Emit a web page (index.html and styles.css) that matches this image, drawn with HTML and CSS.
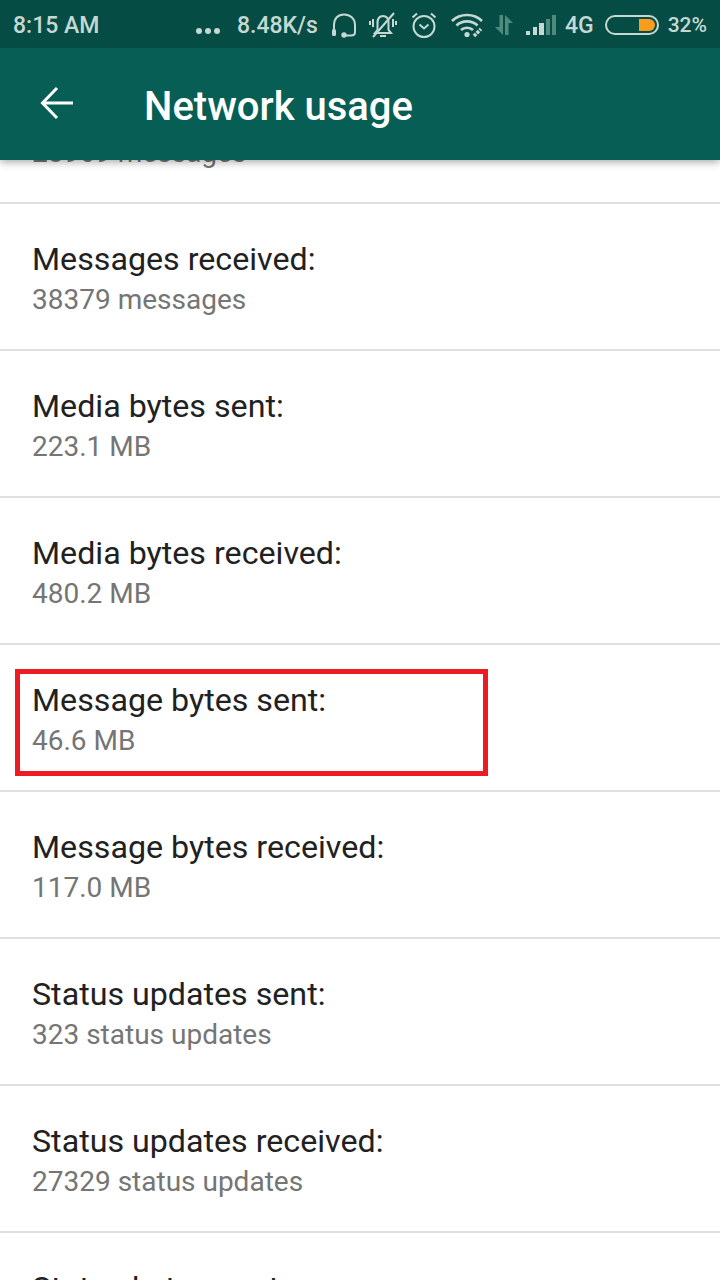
FILE: index.html
```html
<!DOCTYPE html>
<html lang="en">
<head>
<meta charset="utf-8">
<title>Network usage</title>
<link rel="stylesheet" href="styles.css">
</head>
<body>
<div class="phone">
  <header class="statusbar">
    <span class="time">8:15 AM</span>
    <div class="status-right">
      <span class="dots"><i></i><i></i><i></i></span>
      <span class="speed">8.48K/s</span>
      <svg class="ic ic-head" viewBox="0 0 27 25"><path d="M3 19V12C3 5.500 7 1.500 13 1.500S24 5.500 24 12V19C24 21.500 22.500 22.500 20 22.500H13" fill="none" stroke="#c5d8d3" stroke-width="2"/><rect x="1" y="16" width="4" height="7" rx="1.500" fill="#c5d8d3"/><circle cx="13" cy="22" r="2.700" fill="#c5d8d3"/></svg>
      <svg class="ic ic-bell" viewBox="0 0 28 26"><path d="M8.500 18V11C8.500 6.500 10.500 4 14 4S19.500 6.500 19.500 11V18L22 21H6Z M11 24H17" fill="none" stroke="#c5d8d3" stroke-width="2"/><path d="M4 7V15M1 9V13M24 7V15M27 9V13" stroke="#c5d8d3" stroke-width="2"/><path d="M4 25L25 1" stroke="#c5d8d3" stroke-width="2"/></svg>
      <svg class="ic ic-alarm" viewBox="0 0 26 28"><circle cx="13" cy="15.500" r="10.500" fill="none" stroke="#c5d8d3" stroke-width="2"/><path d="M8.500 13.500L13 17.500L17.500 13.500M1.500 6.500L6 2.500M24.500 6.500L20 2.500" fill="none" stroke="#c5d8d3" stroke-width="2"/></svg>
      <svg class="ic ic-wifi" viewBox="0 0 32 26"><path d="M1 9C9 1 23 1 31 9M5.500 13.500C11 8 21 8 26.500 13.500M10 18C13 15 19 15 22 18" fill="none" stroke="#c5d8d3" stroke-width="2.600"/><circle cx="16" cy="22.500" r="2.600" fill="#c5d8d3"/><path d="M23 24L30 17" stroke="#c5d8d3" stroke-width="3.500" stroke-dasharray="3 1" fill="none"/></svg>
      <svg class="ic ic-data" viewBox="0 0 20 22"><path d="M9 1V21L1 13H5.500V1ZM11 21V1L19 9H14.500V21Z" fill="#4f8a7e"/></svg>
      <svg class="ic ic-signal" viewBox="0 0 30 21"><rect x="0" y="16" width="4" height="4" fill="#c5d8d3"/><rect x="7" y="12" width="4" height="8" fill="#c5d8d3"/><rect x="13" y="8" width="5" height="12" fill="#c5d8d3"/><rect x="20" y="4" width="4" height="16" fill="#4f8a7e"/><rect x="26" y="0" width="4" height="20" fill="#4f8a7e"/></svg>
      <span class="net">4G</span>
      <span class="battery"><span class="battery-fill"></span></span>
      <span class="pct">32%</span>
    </div>
  </header>
  <nav class="toolbar">
    <svg class="back" viewBox="0 0 34 34"><path d="M33 17H3M17 2L2.500 17L17 32" fill="none" stroke="#fff" stroke-width="3"/></svg>
    <h1 class="title">Network usage</h1>
  </nav>
  <main class="content">
    <ul class="list">
      <li class="row"><p class="label">Messages sent:</p><p class="value">28969 messages</p></li>
      <li class="row"><p class="label">Messages received:</p><p class="value">38379 messages</p></li>
      <li class="row"><p class="label">Media bytes sent:</p><p class="value">223.1 MB</p></li>
      <li class="row"><p class="label">Media bytes received:</p><p class="value">480.2 MB</p></li>
      <li class="row"><p class="label">Message bytes sent:</p><p class="value">46.6 MB</p><span class="highlight"></span></li>
      <li class="row"><p class="label">Message bytes received:</p><p class="value">117.0 MB</p></li>
      <li class="row"><p class="label">Status updates sent:</p><p class="value">323 status updates</p></li>
      <li class="row"><p class="label">Status updates received:</p><p class="value">27329 status updates</p></li>
      <li class="row"><p class="label">Status bytes sent:</p><p class="value">12.0 MB</p></li>
    </ul>
  </main>
</div>
</body>
</html>
```
FILE: styles.css
```css
* { box-sizing: border-box; }
html, body { margin: 0; padding: 0; }
body { background: #fff; font-family: Roboto, "Liberation Sans", sans-serif; }
.phone { width: 720px; height: 1280px; display: flex; flex-direction: column; overflow: hidden; }
.statusbar { height: 48px; flex: none; background: #054d44; color: #c5d8d3; display: flex; align-items: center; justify-content: space-between; padding: 2px 13px 0 13px; font-size: 23px; font-weight: 500; position: relative; z-index: 3; }
.status-right { display: flex; align-items: center; }
.dots { display: flex; gap: 3px; margin-right: 17px; padding-top: 11px; }
.dots i { width: 6px; height: 6px; border-radius: 50%; background: #c5d8d3; display: block; }
.speed { margin-right: 13px; }
.pct { font-size: 21px; }
.ic { display: block; flex: none; }
.ic-head { width: 27px; height: 25px; margin-right: 11px; }
.ic-bell { width: 28px; height: 26px; margin-right: 14px; }
.ic-alarm { width: 26px; height: 28px; margin-right: 14px; }
.ic-wifi { width: 32px; height: 26px; margin-right: 11px; }
.ic-data { width: 20px; height: 22px; margin-right: 12px; }
.ic-signal { width: 30px; height: 21px; margin-right: 9px; }
.net { margin-right: 11px; }
.battery { width: 54px; height: 20px; border: 2px solid #c5d8d3; border-radius: 10px; display: flex; justify-content: flex-end; padding: 2px; margin-right: 9px; }
.battery-fill { width: 16px; height: 12px; background: #f99d1c; border-radius: 0 6px 6px 0; }
.toolbar { height: 112px; flex: none; background: #075e54; display: flex; align-items: center; padding-left: 40px; box-shadow: 0 2px 8px rgba(0,0,0,.35); position: relative; z-index: 2; }
.back { width: 34px; height: 34px; margin-right: 71px; margin-top: -2px; }
.title { margin: 6px 0 0 -1px; color: #fff; font-size: 40px; font-weight: 500; line-height: 48px; }
.content { flex: 1; min-height: 0; overflow: hidden; }
.list { list-style: none; margin: -103px 0 0; padding: 0; }
.row { height: 147px; border-bottom: 2px solid #e0e0e0; padding: 35px 32px 0; position: relative; }
.label { margin: 0; color: #212121; font-size: 32.2px; line-height: 40px; }
.value { margin: 1px 0 0; color: #757575; font-size: 28px; line-height: 40px; }
.highlight { position: absolute; left: 15px; top: 24px; width: 473px; height: 107px; border: 5px solid #ed1c24; }
```
